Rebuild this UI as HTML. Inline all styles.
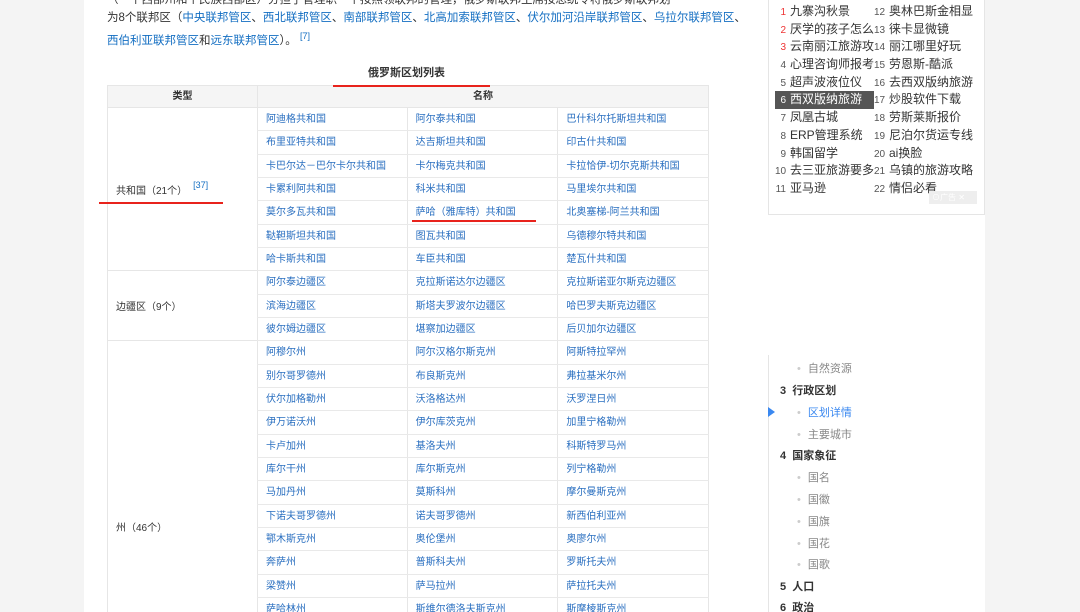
<!DOCTYPE html>
<html><head><meta charset="utf-8">
<style>
*{margin:0;padding:0;box-sizing:border-box}
html,body{width:1080px;height:612px;overflow:hidden}
body{background:#f4f4f4;font-family:"Liberation Sans","Noto Sans CJK SC",sans-serif;position:relative}
#w{position:absolute;left:0;top:0;width:1080px;height:612px;overflow:hidden}
.main{position:absolute;left:84px;top:0;width:901px;height:612px;background:#fff}
.p{position:absolute;left:107px;font-size:11.5px;color:#333;line-height:18px;white-space:nowrap}
a{color:#136ec2;text-decoration:none}
sup{font-size:9px;color:#136ec2}
.title{position:absolute;left:368px;top:64px;font-size:11px;font-weight:bold;color:#333}
.hd{position:absolute;top:85px;height:23px;background:#f5f5f5;border:1px solid #e6e6e6;font-size:10px;font-weight:bold;color:#333;text-align:center;line-height:22px}
.tc{position:absolute;left:107px;width:151px;border:1px solid #e6e6e6;border-top:none;font-size:10px;color:#333;padding-left:8px;display:flex;align-items:center}
.rows{position:absolute;left:257px;top:108px;width:452px}
.r{display:flex;height:23.33px;border-bottom:1px solid #e9e9e9}
.r div{width:151px;border-right:1px solid #e6e6e6;font-size:10px;color:#2a6fc0;padding-left:8px;line-height:24px;white-space:nowrap}
.r div:first-child{border-left:1px solid #e6e6e6;width:151px}
.red{position:absolute;height:2px;background:#e8231c;z-index:5}
.box{position:absolute;left:768px;top:-2px;width:217px;height:217px;border:1px solid #e5e5e5;background:#fff}
.it{position:absolute;font-size:12px;color:#333;white-space:nowrap;line-height:17px}
.it b{font-weight:normal;font-size:10px;color:#555;display:inline-block;width:11px;text-align:right;margin-right:4px}
.it b.h{color:#e33}
.toc{position:absolute;left:768px;top:355px;width:1px;height:257px;background:#e5e5e5}
.t{position:absolute;font-size:11px;white-space:nowrap;line-height:14px}
.t1{left:780px;color:#333;font-weight:bold}
.t2{left:797px;color:#888}
.t2:before{content:"•";color:#ccc;margin-right:7px}
</style></head><body><div id="w">
<div class="main"></div>
<div class="p" style="top:-9px;color:#333">（一个西部州和个民族西部区）分担了管理职一个按照领联邦的管理，俄罗斯联邦主席按总统令将俄罗斯联邦划</div>
<div class="p" style="top:9px">为8个联邦区（<a>中央联邦管区</a>、<a>西北联邦管区</a>、<a>南部联邦管区</a>、<a>北高加索联邦管区</a>、<a>伏尔加河沿岸联邦管区</a>、<a>乌拉尔联邦管区</a>、</div>
<div class="p" style="top:27px"><a>西伯利亚联邦管区</a>和<a>远东联邦管区</a>）。 <sup>[7]</sup></div>
<div class="title">俄罗斯区划列表</div>
<div class="hd" style="left:107px;width:151px">类型</div>
<div class="hd" style="left:257px;width:452px">名称</div>
<div class="red" style="left:333px;top:85px;width:157px"></div>
<div class="tc" style="top:108px;height:163.3px">共和国（21个） <sup style="margin-left:6px;margin-top:-8px">[37]</sup></div>
<div class="tc" style="top:271.3px;height:70px">边疆区（9个）</div>
<div class="tc" style="top:341.3px;height:372px">州（46个）</div>
<div class="rows">
<div class="r"><div>阿迪格共和国</div><div>阿尔泰共和国</div><div>巴什科尔托斯坦共和国</div></div>
<div class="r"><div>布里亚特共和国</div><div>达吉斯坦共和国</div><div>印古什共和国</div></div>
<div class="r"><div>卡巴尔达－巴尔卡尔共和国</div><div>卡尔梅克共和国</div><div>卡拉恰伊-切尔克斯共和国</div></div>
<div class="r"><div>卡累利阿共和国</div><div>科米共和国</div><div>马里埃尔共和国</div></div>
<div class="r"><div>莫尔多瓦共和国</div><div>萨哈（雅库特）共和国</div><div>北奥塞梯-阿兰共和国</div></div>
<div class="r"><div>鞑靼斯坦共和国</div><div>图瓦共和国</div><div>乌德穆尔特共和国</div></div>
<div class="r"><div>哈卡斯共和国</div><div>车臣共和国</div><div>楚瓦什共和国</div></div>
<div class="r"><div>阿尔泰边疆区</div><div>克拉斯诺达尔边疆区</div><div>克拉斯诺亚尔斯克边疆区</div></div>
<div class="r"><div>滨海边疆区</div><div>斯塔夫罗波尔边疆区</div><div>哈巴罗夫斯克边疆区</div></div>
<div class="r"><div>彼尔姆边疆区</div><div>堪察加边疆区</div><div>后贝加尔边疆区</div></div>
<div class="r"><div>阿穆尔州</div><div>阿尔汉格尔斯克州</div><div>阿斯特拉罕州</div></div>
<div class="r"><div>别尔哥罗德州</div><div>布良斯克州</div><div>弗拉基米尔州</div></div>
<div class="r"><div>伏尔加格勒州</div><div>沃洛格达州</div><div>沃罗涅日州</div></div>
<div class="r"><div>伊万诺沃州</div><div>伊尔库茨克州</div><div>加里宁格勒州</div></div>
<div class="r"><div>卡卢加州</div><div>基洛夫州</div><div>科斯特罗马州</div></div>
<div class="r"><div>库尔干州</div><div>库尔斯克州</div><div>列宁格勒州</div></div>
<div class="r"><div>马加丹州</div><div>莫斯科州</div><div>摩尔曼斯克州</div></div>
<div class="r"><div>下诺夫哥罗德州</div><div>诺夫哥罗德州</div><div>新西伯利亚州</div></div>
<div class="r"><div>鄂木斯克州</div><div>奥伦堡州</div><div>奥廖尔州</div></div>
<div class="r"><div>奔萨州</div><div>普斯科夫州</div><div>罗斯托夫州</div></div>
<div class="r"><div>梁赞州</div><div>萨马拉州</div><div>萨拉托夫州</div></div>
<div class="r"><div>萨哈林州</div><div>斯维尔德洛夫斯克州</div><div>斯摩棱斯克州</div></div>
</div>
<div class="red" style="left:99px;top:202px;width:124px"></div>
<div class="red" style="left:412px;top:220px;width:124px"></div>

<div class="box"></div>
<div class="it" style="left:775px;top:3px"><b class="h">1</b>九寨沟秋景</div>
<div class="it" style="left:775px;top:21px"><b class="h">2</b>厌学的孩子怎么</div>
<div class="it" style="left:775px;top:38px"><b class="h">3</b>云南丽江旅游攻</div>
<div class="it" style="left:775px;top:56px"><b>4</b>心理咨询师报考</div>
<div class="it" style="left:775px;top:74px"><b>5</b>超声波液位仪</div>
<div class="it" style="left:775px;top:91px;background:#555;color:#fff;width:99px"><b style="color:#fff">6</b>西双版纳旅游</div>
<div class="it" style="left:775px;top:109px"><b>7</b>凤凰古城</div>
<div class="it" style="left:775px;top:127px"><b>8</b>ERP管理系统</div>
<div class="it" style="left:775px;top:145px"><b>9</b>韩国留学</div>
<div class="it" style="left:775px;top:162px"><b>10</b>去三亚旅游要多</div>
<div class="it" style="left:775px;top:180px"><b>11</b>亚马逊</div>
<div class="it" style="left:874px;top:3px"><b>12</b>奥林巴斯金相显</div>
<div class="it" style="left:874px;top:21px"><b>13</b>徕卡显微镜</div>
<div class="it" style="left:874px;top:38px"><b>14</b>丽江哪里好玩</div>
<div class="it" style="left:874px;top:56px"><b>15</b>劳恩斯-酷派</div>
<div class="it" style="left:874px;top:74px"><b>16</b>去西双版纳旅游</div>
<div class="it" style="left:874px;top:91px"><b>17</b>炒股软件下载</div>
<div class="it" style="left:874px;top:109px"><b>18</b>劳斯莱斯报价</div>
<div class="it" style="left:874px;top:127px"><b>19</b>尼泊尔货运专线</div>
<div class="it" style="left:874px;top:145px"><b>20</b>ai换脸</div>
<div class="it" style="left:874px;top:162px"><b>21</b>乌镇的旅游攻略</div>
<div class="it" style="left:874px;top:180px"><b>22</b>情侣必看</div>
<div style="position:absolute;left:929px;top:191px;width:48px;height:13px;background:#eee;font-size:8px;color:#fff;line-height:13px;padding-left:3px">⊙广告 ✕</div>

<div class="toc"></div>
<div style="position:absolute;left:768px;top:407px;width:0;height:0;border-left:7px solid #3a88f0;border-top:5px solid transparent;border-bottom:5px solid transparent"></div>
<div class="t t2" style="top:362px">自然资源</div>
<div class="t t1" style="top:384px">3&nbsp;&nbsp;行政区划</div>
<div class="t t2" style="top:406px;color:#3a88f0">区划详情</div>
<div class="t t2" style="top:428px">主要城市</div>
<div class="t t1" style="top:449px">4&nbsp;&nbsp;国家象征</div>
<div class="t t2" style="top:471px">国名</div>
<div class="t t2" style="top:493px">国徽</div>
<div class="t t2" style="top:515px">国旗</div>
<div class="t t2" style="top:537px">国花</div>
<div class="t t2" style="top:558px">国歌</div>
<div class="t t1" style="top:580px">5&nbsp;&nbsp;人口</div>
<div class="t t1" style="top:601px">6&nbsp;&nbsp;政治</div>
</div></body></html>
